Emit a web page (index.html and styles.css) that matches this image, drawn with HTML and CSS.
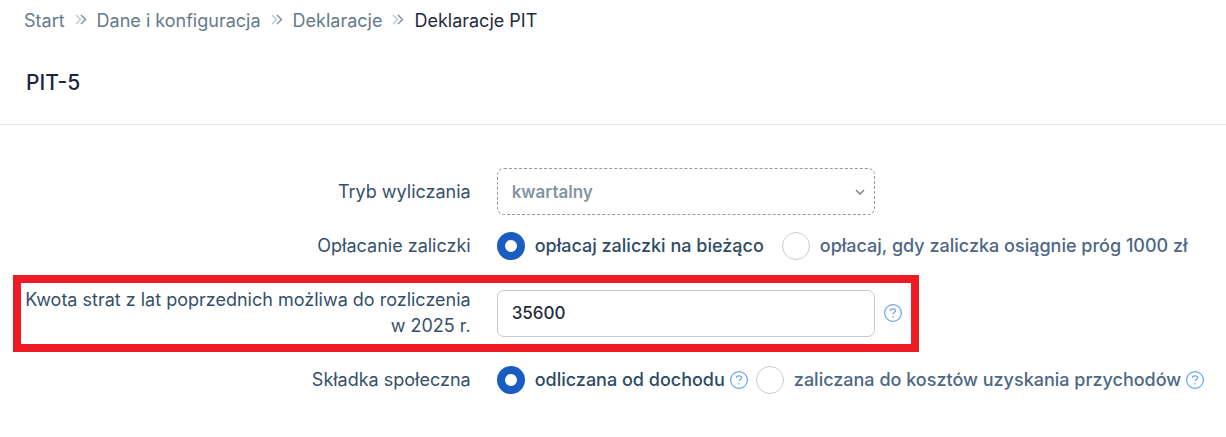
FILE: index.html
```html
<!DOCTYPE html>
<html lang="pl">
  <head>
    <meta charset="utf-8">
    <meta name="viewport" content="width=device-width, initial-scale=1">
    <link rel="stylesheet" href="styles.css">
    <title>Deklaracje PIT</title>
  </head>
  <body>
    <svg class="symbols">
      <symbol id="chevrons" viewBox="0 0 12 12">
        <path d="M1 1l4.5 4.5L1 10" stroke="#c3cbd2"/>
        <path d="M6 1l4.5 4.5L6 10" stroke="#8795a2"/>
      </symbol>
      <symbol id="help" viewBox="0 0 18 18">
        <circle cx="9" cy="9" r="8.4"/>
        <path d="M6.4 7V6.6C6.4 5.5 7.5 4.8 9 4.8s2.6.7 2.6 1.9c0 1.6-2.6 1.7-2.6 3.6M9 12v1.5"/>
      </symbol>
    </svg>
    <header>
      <nav class="breadcrumbs" aria-label="Okruszki">
        <a href="#">Start</a>
        <svg class="separator"><use href="#chevrons"/></svg>
        <a href="#">Dane i konfiguracja</a>
        <svg class="separator"><use href="#chevrons"/></svg>
        <a href="#">Deklaracje</a>
        <svg class="separator"><use href="#chevrons"/></svg>
        <a href="#" class="current" aria-current="page">Deklaracje PIT</a>
      </nav>
      <h1>PIT-5</h1>
    </header>
    <form>
      <label class="name" for="mode">Tryb wyliczania</label>
      <div class="select">
        <select id="mode" disabled>
          <option>kwartalny</option>
        </select>
        <svg class="arrow" viewBox="0 0 10 6"><path d="M1 1l4 4 4-4"/></svg>
      </div>

      <span class="name" id="advances">Opłacanie zaliczki</span>
      <div class="options" role="radiogroup" aria-labelledby="advances">
        <label class="option"><input type="radio" name="advances" checked>opłacaj zaliczki na bieżąco</label>
        <label class="option spaced"><input type="radio" name="advances">opłacaj, gdy zaliczka osiągnie próg 1000 zł</label>
      </div>

      <label class="name loss" for="loss">Kwota strat z lat poprzednich możliwa do rozliczenia w 2025 r.</label>
      <input class="loss" id="loss" type="text" value="35600">
      <button class="help loss" type="button" aria-label="Pomoc"><svg><use href="#help"/></svg></button>
      <div class="highlight"></div>

      <span class="name" id="social">Składka społeczna</span>
      <div class="options" role="radiogroup" aria-labelledby="social">
        <label class="option"><input type="radio" name="social" checked>odliczana od dochodu</label>
        <button class="help" type="button" aria-label="Pomoc"><svg><use href="#help"/></svg></button>
        <label class="option"><input type="radio" name="social">zaliczana do kosztów uzyskania przychodów</label>
        <button class="help" type="button" aria-label="Pomoc"><svg><use href="#help"/></svg></button>
      </div>
    </form>
  </body>
</html>
```
FILE: styles.css
```css
* {
  box-sizing: border-box;
}
body {
  margin: 0;
  background-color: white;
  color: #35506b;
  font: 18px/26px Inter, sans-serif;
}
svg {
  fill: none;
}
.symbols {
  display: none;
}
header {
  padding: 8px 24px 28px;
  border-bottom: solid 1px #e6ebee;
}
.breadcrumbs {
  display: flex;
  flex-wrap: wrap;
  align-items: center;
  gap: 10px;
}
.breadcrumbs a {
  color: #647a8d;
  text-decoration: none;
}
.breadcrumbs .current {
  color: #1f2b3d;
}
.separator {
  width: 12px;
  height: 12px;
  margin-bottom: 2px;
  stroke-width: 1.5;
}
h1 {
  margin: 36px 0 0;
  padding-left: 2px;
  color: #1b2640;
  font-size: 21px;
  font-weight: 500;
  line-height: 26px;
}

form {
  display: grid;
  grid-template-columns: minmax(0, 125fr) minmax(0, 100fr) 36px minmax(0, 77fr);
  row-gap: 17px;
  align-items: center;
  padding: 43px 24px;
}
.name {
  grid-column: 1;
  padding-right: 26px;
  text-align: right;
}

.select {
  display: grid;
  align-items: center;
}
.select > * {
  grid-area: 1 / 1;
}
select,
input[type='text'] {
  width: 100%;
  height: 47px;
  padding: 0 14px;
  border: solid 1px #c3cdd5;
  border-radius: 7px;
  background-color: white;
  color: #1f2b3d;
  font: 450 17px Inter, sans-serif;
}
select {
  appearance: none;
  border: dashed 1px #8f9ca8;
  color: #8495a6;
  font-weight: 600;
  opacity: 1;
}
.arrow {
  width: 10px;
  height: 6px;
  margin-right: 10px;
  justify-self: end;
  stroke: #6b7f92;
  stroke-width: 1.4;
  pointer-events: none;
}

.options {
  grid-column: 2 / -1;
  display: flex;
  align-items: center;
}
.option {
  display: flex;
  align-items: center;
  gap: 10px;
  color: #4d6785;
  font-weight: 450;
  white-space: nowrap;
}
.option:has(:checked) {
  color: #2f4b66;
}
.spaced {
  margin-left: 18px;
}
input[type='radio'] {
  appearance: none;
  width: 28px;
  height: 28px;
  margin: 0;
  border: solid 1px #c3cdd5;
  border-radius: 50%;
  background-color: white;
}
input[type='radio']:checked {
  border: solid 8px #1a5dc2;
}
.help {
  display: flex;
  width: 18px;
  height: 18px;
  margin: 0 8px 0 5px;
  padding: 0;
  border: none;
  background: none;
  stroke: #6ba3ee;
  stroke-width: 1.2;
}
.help:last-child {
  margin-right: 0;
}
.help svg {
  width: 18px;
  height: 18px;
}

/* the loss row is taller, so that the frame fits round it */
.loss {
  grid-row: 3;
}
.name.loss {
  padding-top: 10px;
  padding-bottom: 10px;
}
input.loss {
  grid-column: 2;
}
.help.loss {
  grid-column: 3;
  margin: 0 9px;
}
.highlight {
  grid-area: 3 / 1 / 4 / 4;
  align-self: stretch;
  margin: -2px -8px -3px -11px;
  border: solid 8px #ed1c24;
  pointer-events: none;
}
```
